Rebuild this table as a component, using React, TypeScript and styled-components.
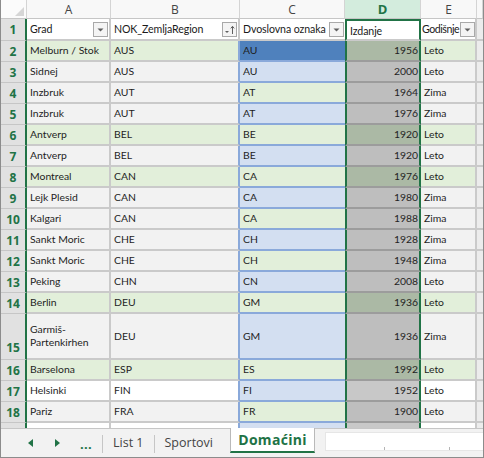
import styled, { createGlobalStyle, css } from 'styled-components'

const GREEN = '#217346'
const GRID = '#cacaca'
const BLUE_LINE = '#8aa9da'
const HEAD_LINE = '#d4d4d4'

type Col = 'a' | 'b' | 'c' | 'd' | 'e' | 'f'
type Tone = 'green' | 'gray' | 'white'

const GlobalStyle = createGlobalStyle`
  html, body {
    margin: 0;
    padding: 0;
    background: #fff;
  }
  * {
    box-sizing: border-box;
  }
`

const Window = styled.div`
  width: 484px;
  height: 458px;
  display: flex;
  flex-direction: column;
  border: 1px solid #8c8c8c;
  border-top: none;
  overflow: hidden;
  background: #fff;
`

const Sheet = styled.div`
  display: grid;
  grid-template-columns: 26px 84px 129px 105px 76px 56px 6px;
  grid-template-rows: 19px 22px repeat(13, 21px) 46px repeat(4, 21px);
  height: 428px;
  flex-shrink: 0;
  overflow: hidden;
`

const Corner = styled.div`
  display: flex;
  align-items: flex-end;
  justify-content: flex-end;
  padding: 0 2px 2px 0;
  background: #fbfbfb;
  border-right: 1px solid ${HEAD_LINE};
  border-bottom: 1px solid #c6c6c6;
`

const ColHead = styled.div<{ $active?: boolean }>`
  display: flex;
  align-items: center;
  justify-content: center;
  background: #f8f8f8;
  color: #444;
  font-family: 'Open Sans', 'Noto Sans', sans-serif;
  font-size: 12px;
  border-right: 1px solid ${HEAD_LINE};
  border-bottom: 1px solid #c6c6c6;
  ${(p) =>
    p.$active &&
    css`
      background: #d3ecdd;
      color: ${GREEN};
      font-weight: 700;
      font-size: 13px;
    `}
`

const RowHead = styled.div<{ $tall?: boolean }>`
  display: flex;
  justify-content: center;
  align-items: ${(p) => (p.$tall ? 'flex-end' : 'center')};
  padding-bottom: ${(p) => (p.$tall ? '3px' : '0')};
  background: #e1e1e1;
  color: ${GREEN};
  font-family: 'Open Sans', 'Noto Sans', sans-serif;
  font-weight: 700;
  font-size: 12px;
  border-right: 2px solid ${GREEN};
  border-bottom: 1px solid #c6c6c6;
`

const rightBorder = (col: Col) => {
  switch (col) {
    case 'a':
    case 'e':
      return `border-right: 2px solid ${GRID};`
    case 'b':
      return `border-right: 2px solid ${BLUE_LINE};`
    case 'd':
      return `border-left: 2px solid ${GREEN}; border-right: 2px solid ${GREEN};`
    default:
      return ''
  }
}

const HeadCell = styled.div<{ $col: Col }>`
  display: flex;
  align-items: center;
  gap: 2px;
  padding: 0 1px 0 3px;
  background: #fff;
  color: #1a1a1a;
  font-family: Lato, 'Liberation Sans', sans-serif;
  font-size: 10.6px;
  letter-spacing: -0.1px;
  white-space: nowrap;
  overflow: hidden;
  border-bottom: 2px solid ${GRID};
  ${(p) => (p.$col === 'b' ? `border-right: 2px solid ${GRID};` : rightBorder(p.$col))}
  ${(p) => p.$col === 'd' && `border-top: 2px solid ${GREEN}; padding-top: 2px;`}
  ${(p) => p.$col === 'e' && 'padding: 0 0 0 1px; gap: 0; letter-spacing: -0.45px;'}
  ${(p) => p.$col === 'f' && 'background: #ececec;'}
`

const HeadText = styled.span`
  flex: 1;
  min-width: 0;
  overflow: hidden;
`

const FilterBox = styled.span`
  flex-shrink: 0;
  width: 15px;
  height: 15px;
  display: flex;
  border: 1px solid #a9a9a9;
  background: #f4f4f4;
`

const cellBg = (col: Col, tone: Tone, row: number) => {
  if (col === 'c') {
    if (row === 2) return '#4f81bd'
    return row % 2 === 0 ? '#e2efda' : '#d3dff1'
  }
  if (col === 'd') {
    if (tone === 'green') return '#abb9a5'
    return tone === 'white' ? '#c8c8c8' : '#bebebe'
  }
  if (col === 'f') return '#ececec'
  if (tone === 'green') return '#e2efda'
  return tone === 'white' ? '#ffffff' : '#f2f2f2'
}

const lineColor = (col: Col) => {
  if (col === 'c') return BLUE_LINE
  if (col === 'd') return '#9c9c9c'
  return GRID
}

const Cell = styled.div<{ $col: Col; $tone: Tone; $row: number }>`
  display: flex;
  align-items: center;
  justify-content: ${(p) => (p.$col === 'd' ? 'flex-end' : 'flex-start')};
  padding: ${(p) => (p.$col === 'd' ? '0 1px 0 3px' : '0 3px')};
  background: ${(p) => cellBg(p.$col, p.$tone, p.$row)};
  color: #1e1e1e;
  font-family: Lato, 'Liberation Sans', sans-serif;
  font-size: 10.4px;
  line-height: 13px;
  overflow: hidden;
  border-bottom: 2px solid ${(p) => lineColor(p.$col)};
  ${(p) => rightBorder(p.$col)}
`

const TabBar = styled.div`
  flex: 1;
  display: flex;
  align-items: stretch;
  background: #f2f2f2;
  border-top: 1px solid #c6c6c6;
  font-family: 'Open Sans', 'Noto Sans', sans-serif;
`

const Nav = styled.div`
  display: flex;
  align-items: center;
  gap: 22px;
  padding-left: 27px;
  width: 101px;
`

const Dots = styled.span`
  color: ${GREEN};
  font-weight: 700;
  font-size: 13px;
  letter-spacing: 0.3px;
  padding-top: 2px;
  margin-left: -2px;
`

const Sep = styled.div`
  width: 1px;
  margin: 6px 0 4px;
  background: #c6c6c6;
`

const Tab = styled.div<{ $padRight?: number }>`
  display: flex;
  align-items: center;
  padding: 0 ${(p) => p.$padRight ?? 10}px 2px 10px;
  color: #444;
  font-size: 12.5px;
`

const ActiveTab = styled.div`
  display: flex;
  align-items: center;
  justify-content: center;
  width: 85px;
  margin: -1px 0 4px;
  padding-bottom: 1px;
  background: #fff;
  color: ${GREEN};
  font-weight: 700;
  font-size: 14px;
  letter-spacing: 0.3px;
  border-left: 1px solid #b9b9b9;
  border-right: 1px solid #b9b9b9;
  border-bottom: 2px solid ${GREEN};
`

const ScrollArea = styled.div`
  flex: 1;
  display: flex;
  padding: 3px 0 6px 10px;
`

const ScrollTrack = styled.div`
  flex: 1;
  display: flex;
  align-items: flex-end;
  gap: 64px;
  padding-left: 58px;
  background: #fff;
  border: 1px solid #e6e6e6;
  border-right: none;
`

const Tick = styled.span`
  width: 1px;
  height: 3px;
  background: #b5b5b5;
`

type Row = [string, string, string, number, string, Tone]

const rows: Row[] = [
  ['Melburn / Stok', 'AUS', 'AU', 1956, 'Leto', 'green'],
  ['Sidnej', 'AUS', 'AU', 2000, 'Leto', 'gray'],
  ['Inzbruk', 'AUT', 'AT', 1964, 'Zima', 'gray'],
  ['Inzbruk', 'AUT', 'AT', 1976, 'Zima', 'gray'],
  ['Antverp', 'BEL', 'BE', 1920, 'Leto', 'green'],
  ['Antverp', 'BEL', 'BE', 1920, 'Leto', 'gray'],
  ['Montreal', 'CAN', 'CA', 1976, 'Leto', 'green'],
  ['Lejk Plesid', 'CAN', 'CA', 1980, 'Zima', 'gray'],
  ['Kalgari', 'CAN', 'CA', 1988, 'Zima', 'gray'],
  ['Sankt Moric', 'CHE', 'CH', 1928, 'Zima', 'gray'],
  ['Sankt Moric', 'CHE', 'CH', 1948, 'Zima', 'gray'],
  ['Peking', 'CHN', 'CN', 2008, 'Leto', 'gray'],
  ['Berlin', 'DEU', 'GM', 1936, 'Leto', 'green'],
  ['Garmiš-Partenkirhen', 'DEU', 'GM', 1936, 'Zima', 'gray'],
  ['Barselona', 'ESP', 'ES', 1992, 'Leto', 'green'],
  ['Helsinki', 'FIN', 'FI', 1952, 'Leto', 'white'],
  ['Pariz', 'FRA', 'FR', 1900, 'Leto', 'gray'],
]

const FilterIcon = () => (
  <FilterBox>
    <svg width="13" height="13" viewBox="0 0 13 13">
      <polygon points="3.5,5.5 9.5,5.5 6.5,8.5" fill="#5f5f5f" />
    </svg>
  </FilterBox>
)

const SortIcon = () => (
  <FilterBox>
    <svg width="13" height="13" viewBox="0 0 13 13">
      <polygon points="2,8 6,8 4,10" fill="#5f5f5f" />
      <line x1="9.5" y1="3.5" x2="9.5" y2="11" stroke="#5f5f5f" strokeWidth="1" />
      <polyline points="7.8,5.4 9.5,3.3 11.2,5.4" fill="none" stroke="#5f5f5f" strokeWidth="1" />
    </svg>
  </FilterBox>
)

const Arrow = ({ dir }: { dir: 'left' | 'right' }) => (
  <svg width="5" height="8" viewBox="0 0 5 8">
    <polygon points={dir === 'left' ? '5,0 5,8 0,4' : '0,0 0,8 5,4'} fill={GREEN} />
  </svg>
)

const App = () => {
  return (
    <>
      <GlobalStyle />
      <Window>
        <Sheet>
          <Corner>
            <svg width="9" height="9" viewBox="0 0 9 9">
              <polygon points="9,0 9,9 0,9" fill="#d6d6d6" />
            </svg>
          </Corner>
          <ColHead>A</ColHead>
          <ColHead>B</ColHead>
          <ColHead>C</ColHead>
          <ColHead $active>D</ColHead>
          <ColHead>E</ColHead>
          <ColHead />

          <RowHead>1</RowHead>
          <HeadCell $col="a">
            <HeadText>Grad</HeadText>
            <FilterIcon />
          </HeadCell>
          <HeadCell $col="b">
            <HeadText>NOK_ZemljaRegion</HeadText>
            <SortIcon />
          </HeadCell>
          <HeadCell $col="c">
            <HeadText>Dvoslovna oznaka</HeadText>
            <FilterIcon />
          </HeadCell>
          <HeadCell $col="d">
            <HeadText>Izdanje</HeadText>
          </HeadCell>
          <HeadCell $col="e">
            <HeadText>Godišnje</HeadText>
            <FilterIcon />
          </HeadCell>
          <HeadCell $col="f" />

          {rows.map(([city, noc, code, year, season, tone], i) => {
            const row = i + 2
            return [
              <RowHead key={`h${row}`} $tall={row === 15}>
                {row}
              </RowHead>,
              <Cell key={`a${row}`} $col="a" $tone={tone} $row={row}>
                {city}
              </Cell>,
              <Cell key={`b${row}`} $col="b" $tone={tone} $row={row}>
                {noc}
              </Cell>,
              <Cell key={`c${row}`} $col="c" $tone={tone} $row={row}>
                {code}
              </Cell>,
              <Cell key={`d${row}`} $col="d" $tone={tone} $row={row}>
                {year}
              </Cell>,
              <Cell key={`e${row}`} $col="e" $tone={tone} $row={row}>
                {season}
              </Cell>,
              <Cell key={`f${row}`} $col="f" $tone={tone} $row={row} />,
            ]
          })}

          <RowHead />
          <Cell $col="a" $tone="white" $row={19} />
          <Cell $col="b" $tone="white" $row={19} />
          <Cell $col="c" $tone="white" $row={19} />
          <Cell $col="d" $tone="white" $row={19} />
          <Cell $col="e" $tone="white" $row={19} />
          <Cell $col="f" $tone="white" $row={19} />
        </Sheet>

        <TabBar>
          <Nav>
            <Arrow dir="left" />
            <Arrow dir="right" />
            <Dots>...</Dots>
          </Nav>
          <Sep />
          <Tab>List 1</Tab>
          <Sep />
          <Tab $padRight={17}>Sportovi</Tab>
          <ActiveTab>Domaćini</ActiveTab>
          <ScrollArea>
            <ScrollTrack>
              <Tick />
              <Tick />
            </ScrollTrack>
          </ScrollArea>
        </TabBar>
      </Window>
    </>
  )
}

export default App
